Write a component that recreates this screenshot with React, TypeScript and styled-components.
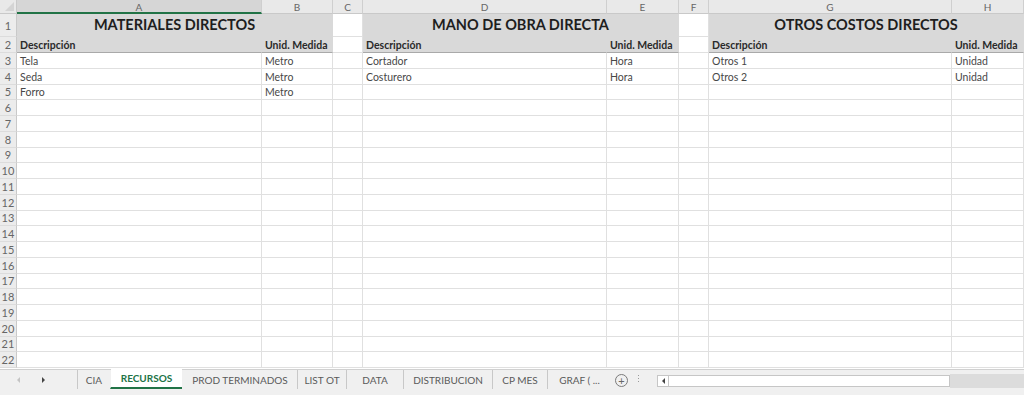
import styled, {createGlobalStyle} from "styled-components";

const GlobalStyle = createGlobalStyle`
  html, body {
    margin: 0;
    padding: 0;
    background: #ffffff;
    overflow: hidden;
  }
  body {
    font-family: Lato, "Open Sans", sans-serif;
  }
`;

const Window = styled.div`
  width: 1024px;
  height: 395px;
  display: flex;
  flex-direction: column;
  background: #fff;
`;

const Sheet = styled.div`
  display: grid;
  grid-template-columns: 17px 245px 71px 30px 244px 72px 30px 243px 72px;
  grid-template-rows: 14px 23px 16px repeat(20, 15.75px);
`;

const Corner = styled.div`
  background: #e9e9e9;
  border-right: 1px solid #c9c9c9;
  border-bottom: 1px solid #c9c9c9;
  box-sizing: border-box;
  position: relative;
  &::after {
    content: "";
    position: absolute;
    right: 2px;
    bottom: 2px;
    border-left: 9px solid transparent;
    border-bottom: 9px solid #d4d4d4;
  }
`;

const ColHead = styled.div<{$active?: boolean}>`
  box-sizing: border-box;
  background: ${p => (p.$active ? "#d6d6d6" : "#e9e9e9")};
  border-right: 1px solid #cfcfcf;
  border-bottom: ${p => (p.$active ? "2px solid #217346" : "1px solid #c9c9c9")};
  color: #666;
  font-size: 10px;
  display: flex;
  align-items: center;
  justify-content: center;
  padding-top: 1px;
`;

const RowHead = styled.div`
  box-sizing: border-box;
  background: #ececec;
  border-right: 1px solid #c9c9c9;
  border-bottom: 1px solid #dcdcdc;
  color: #666;
  font-size: 11px;
  display: flex;
  align-items: center;
  justify-content: center;
`;

const Cell = styled.div<{$fill?: boolean; $bold?: boolean; $title?: boolean; $span?: number; $underline?: boolean}>`
  box-sizing: border-box;
  grid-column: span ${p => p.$span || 1};
  background: ${p => (p.$fill ? "#d9d9d9" : "#fff")};
  border-right: 1px solid ${p => (p.$fill ? "#d9d9d9" : "#e0e0e0")};
  border-bottom: 1px solid ${p => (p.$underline ? "#a9a9a9" : p.$fill ? "#d9d9d9" : "#e0e0e0")};
  color: ${p => (p.$title ? "#1e1e1e" : p.$bold ? "#2a2a2a" : "#474747")};
  font-size: ${p => (p.$title ? "14.5px" : "10.5px")};
  font-weight: ${p => (p.$bold || p.$title ? 700 : 400)};
  display: flex;
  align-items: flex-end;
  justify-content: ${p => (p.$title ? "center" : "flex-start")};
  padding: 0 3px ${p => (p.$title ? "3px" : "1px")};
  white-space: nowrap;
  overflow: hidden;
`;

const TabBar = styled.div`
  flex: 1;
  display: flex;
  align-items: flex-start;
  background: #f0f0f0;
  border-top: 1px solid #d0d0d0;
  margin-top: 1px;
`;

const Arrows = styled.div`
  width: 77px;
  height: 20px;
  display: flex;
  align-items: center;
  gap: 22px;
  padding-left: 17px;
  box-sizing: border-box;
`;

const Arrow = styled.span<{$dir: "left" | "right"; $dim?: boolean}>`
  width: 0;
  height: 0;
  border-top: 3px solid transparent;
  border-bottom: 3px solid transparent;
  ${p => (p.$dir === "left" ? "border-right" : "border-left")}: 3px solid ${p => (p.$dim ? "#c4c4c4" : "#444")};
`;

const Tab = styled.div<{$active?: boolean; $sep?: boolean; $w: number}>`
  width: ${p => p.$w}px;
  flex: none;
  box-sizing: border-box;
  height: ${p => (p.$active ? "20px" : "19px")};
  display: flex;
  align-items: center;
  justify-content: center;
  font-size: 10px;
  white-space: nowrap;
  color: ${p => (p.$active ? "#217346" : "#5a5a5a")};
  font-weight: ${p => (p.$active ? 700 : 400)};
  background: ${p => (p.$active ? "#fff" : "transparent")};
  border-bottom: ${p => (p.$active ? "2px solid #217346" : "none")};
  margin-top: ${p => (p.$active ? "-1px" : "0")};
  border-left: 1px solid ${p => (p.$sep ? "#c8c8c8" : "transparent")};
  background-clip: padding-box;
`;

const AddButton = styled.div`
  width: 11px;
  height: 11px;
  margin: 4px 0 0 4px;
  border: 1px solid #7a7a7a;
  border-radius: 50%;
  display: flex;
  align-items: center;
  justify-content: center;
  color: #666;
  font-size: 11px;
  line-height: 1;
`;

const Dots = styled.div`
  margin: 5px 0 0 10px;
  width: 2px;
  display: flex;
  flex-direction: column;
  gap: 2px;
  span {
    width: 1px;
    height: 1px;
    background: #9a9a9a;
  }
`;

const Scroll = styled.div`
  margin: 5px 0 0 17px;
  width: 293px;
  height: 12px;
  background: #fff;
  border: 1px solid #c6c6c6;
  box-sizing: border-box;
  display: flex;
`;

const ScrollBtn = styled.div`
  width: 10px;
  border-right: 1px solid #c6c6c6;
  display: flex;
  align-items: center;
  justify-content: center;
`;

const Rest = styled.div`
  flex: 1;
  height: 14px;
  background: #dcdcdc;
  margin-top: 4px;
  position: relative;
  &::after {
    content: "";
    position: absolute;
    left: -114px;
    top: 22px;
    width: 32px;
    height: 3px;
    background: #c9c9c9;
  }
`;

const cols = ["A", "B", "C", "D", "E", "F", "G", "H"];

const titles = ["MATERIALES DIRECTOS", "MANO DE OBRA DIRECTA", "OTROS COSTOS DIRECTOS"];

const data: string[][] = [
  ["Tela", "Metro", "", "Cortador", "Hora", "", "Otros 1", "Unidad"],
  ["Seda", "Metro", "", "Costurero", "Hora", "", "Otros 2", "Unidad"],
  ["Forro", "Metro", "", "", "", "", "", ""],
];

const tabs: [string, number][] = [
  ["CIA", 33],
  ["RECURSOS", 72],
  ["PROD TERMINADOS", 115],
  ["LIST OT", 49],
  ["DATA", 57],
  ["DISTRIBUCION", 89],
  ["CP MES", 55],
  ["GRAF ( ...", 64],
];

function App() {
  const rows = [];
  for (let r = 3; r <= 22; r++) {
    const vals = data[r - 3] || [];
    rows.push(<RowHead key={`h${r}`}>{r}</RowHead>);
    cols.forEach((c, i) => {
      rows.push(<Cell key={`${c}${r}`}>{vals[i] || ""}</Cell>);
    });
  }

  return (
    <Window>
      <GlobalStyle/>
      <Sheet>
        <Corner/>
        {cols.map(c => (
          <ColHead key={c} $active={c === "A"}>{c}</ColHead>
        ))}

        <RowHead>1</RowHead>
        {titles.map((t, i) => [
          <Cell key={t} $span={2} $fill $title>{t}</Cell>,
          i < 2 ? <Cell key={`gap1${i}`}/> : null,
        ])}

        <RowHead>2</RowHead>
        {titles.map((t, i) => [
          <Cell key={`d${i}`} $fill $bold $underline>Descripción</Cell>,
          <Cell key={`u${i}`} $fill $bold $underline>Unid. Medida</Cell>,
          i < 2 ? <Cell key={`gap2${i}`}/> : null,
        ])}

        {rows}
      </Sheet>

      <TabBar>
        <Arrows>
          <Arrow $dir="left" $dim/>
          <Arrow $dir="right"/>
        </Arrows>
        {tabs.map(([t, w], i) => (
          <Tab key={t} $w={w} $active={t === "RECURSOS"} $sep={i === 0 || i > 2}>{t}</Tab>
        ))}
        <AddButton>+</AddButton>
        <Dots><span/><span/><span/></Dots>
        <Scroll>
          <ScrollBtn><Arrow $dir="left"/></ScrollBtn>
        </Scroll>
        <Rest/>
      </TabBar>
    </Window>
  );
}

export default App;
